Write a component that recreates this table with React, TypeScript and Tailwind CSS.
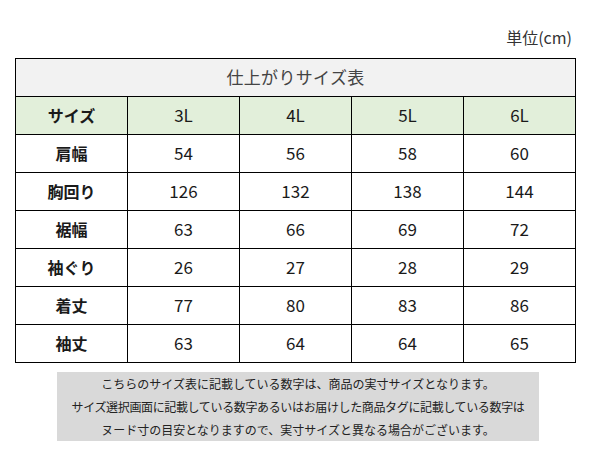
const sizes = ["3L", "4L", "5L", "6L"];

const rows: { label: string; values: number[] }[] = [
  { label: "肩幅", values: [54, 56, 58, 60] },
  { label: "胸回り", values: [126, 132, 138, 144] },
  { label: "裾幅", values: [63, 66, 69, 72] },
  { label: "袖ぐり", values: [26, 27, 28, 29] },
  { label: "着丈", values: [77, 80, 83, 86] },
  { label: "袖丈", values: [63, 64, 64, 65] },
];

const cell = "h-[38px] pb-[2px] flex items-center justify-center border-r border-b border-black";

const App = () => {
  return (
    <div className="w-[589px] h-[458px] bg-white pt-[26px] font-['Noto_Sans_CJK_JP',sans-serif] text-[#1a1a1a]">
      <p className="text-right pr-[17px] text-[16px] leading-[22px] text-[#333]">単位(cm)</p>

      <div className="ml-[15px] mt-[10px] grid grid-cols-[repeat(5,112px)] w-fit border-l border-t border-black">
        <div className={`${cell} col-span-5 bg-[#f2f2f2] text-[17px] text-[#444] tracking-[0.02em]`}>
          仕上がりサイズ表
        </div>

        {/* header */}
        <div className={`${cell} bg-[#e2efda] text-[16px] font-bold`}>サイズ</div>
        {sizes.map((s) => (
          <div key={s} className={`${cell} bg-[#e2efda] text-[17px]`}>
            {s}
          </div>
        ))}

        {rows.map((r) => (
          <div key={r.label} className="contents">
            <div className={`${cell} text-[16px] font-bold`}>{r.label}</div>
            {r.values.map((v, i) => (
              <div key={i} className={`${cell} text-[17px]`}>
                {v}
              </div>
            ))}
          </div>
        ))}
      </div>

      <div className="ml-[57px] mt-[9px] w-[482px] bg-[#d9d9d9] text-center text-[12px] leading-[23px] text-[#222]">
        <p>こちらのサイズ表に記載している数字は、商品の実寸サイズとなります。</p>
        <p className="tracking-[-0.03em]">サイズ選択画面に記載している数字あるいはお届けした商品タグに記載している数字は</p>
        <p>ヌード寸の目安となりますので、実寸サイズと異なる場合がございます。</p>
      </div>
    </div>
  );
};

export default App;
